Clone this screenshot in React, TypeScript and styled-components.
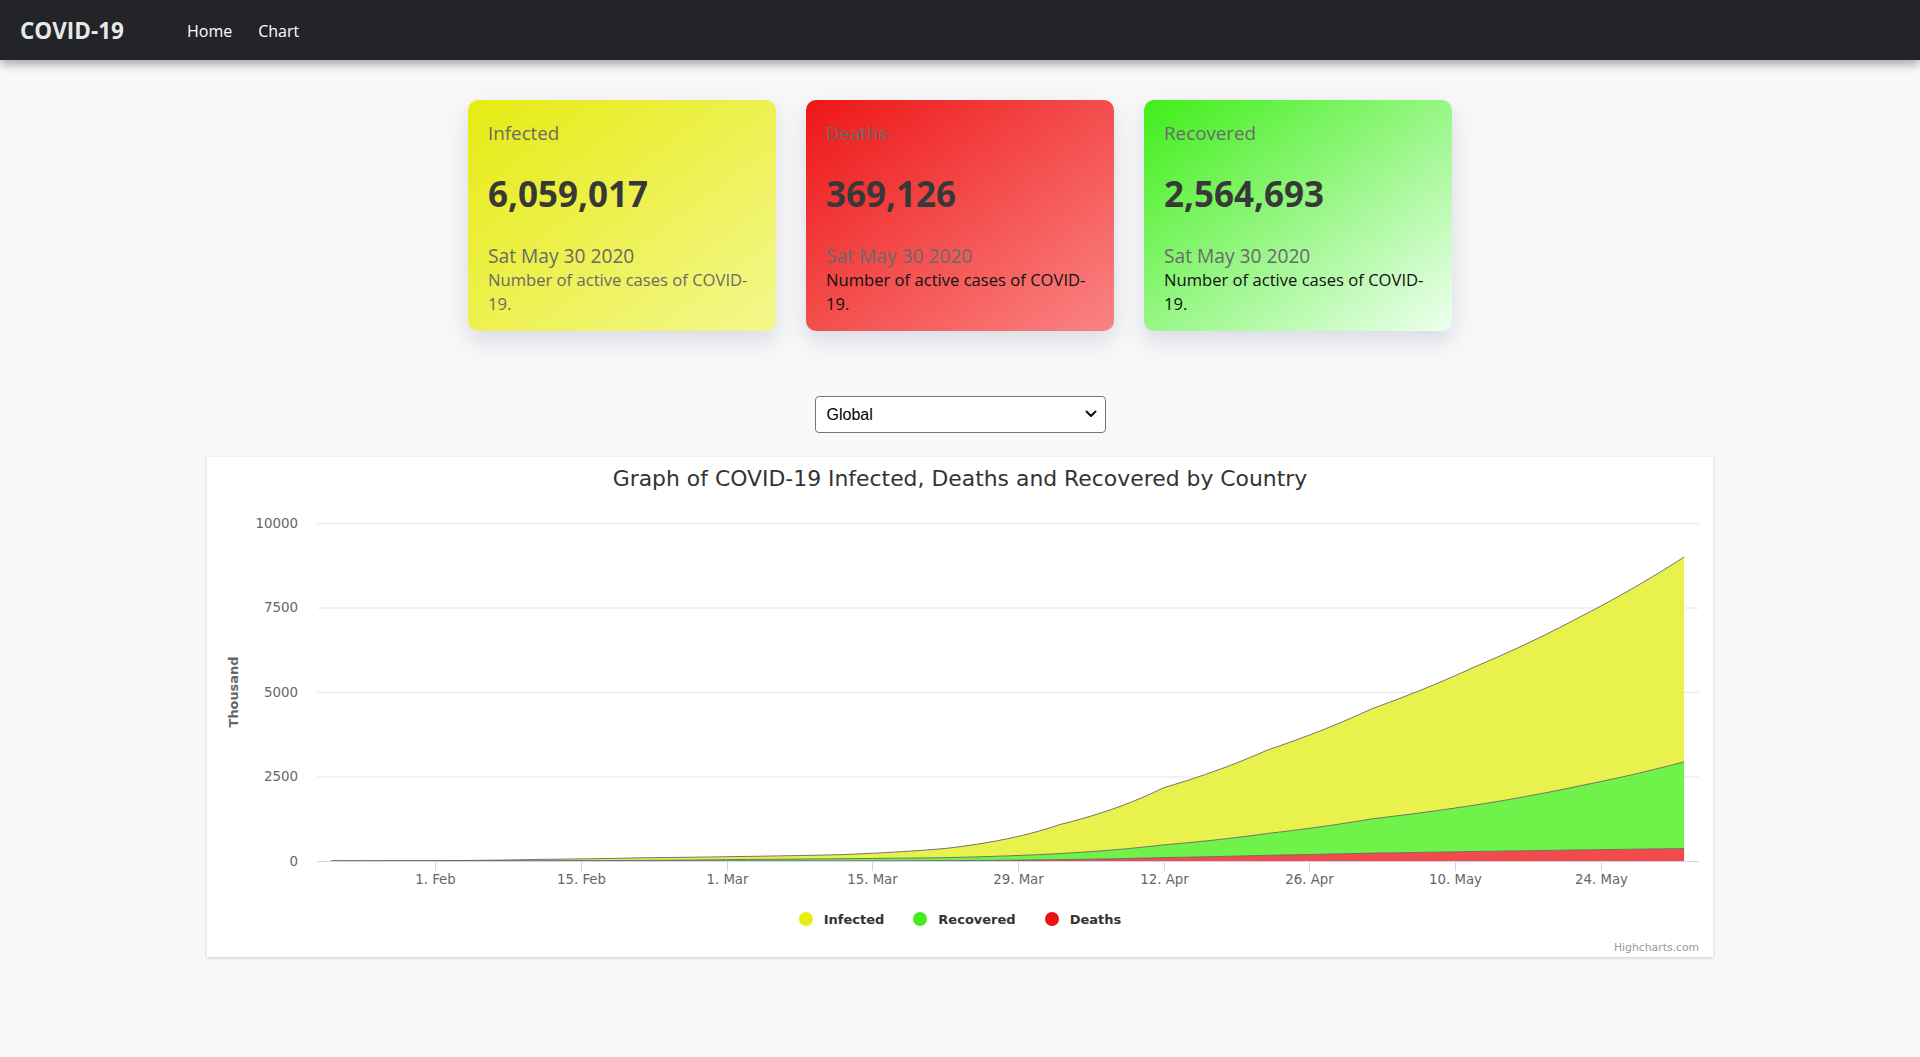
import React from "react";
import styled, { createGlobalStyle } from "styled-components";

const GlobalStyle = createGlobalStyle`
  html, body { margin: 0; padding: 0; }
  body {
    background: #f8f8f8;
    font-family: "Open Sans", "Noto Sans", sans-serif;
  }
`;

const Page = styled.div`
  min-height: 1057px;
  display: flex;
  flex-direction: column;
`;

const NavBar = styled.nav`
  height: 60px;
  background: #222427;
  display: flex;
  align-items: center;
  padding: 0 20px;
  box-shadow: 0 4px 10px rgba(0, 0, 0, 0.35);
  position: relative;
  z-index: 1;
`;

const Brand = styled.span`
  font-size: 22.5px;
  font-weight: 700;
  color: #e8e8e8;
  margin-right: 63px;
  padding-top: 1px;
`;

const NavLinks = styled.div`
  display: flex;
  gap: 26px;
  padding-top: 2px;
`;

const NavLink = styled.a`
  font-size: 16px;
  color: #ffffff;
  text-decoration: none;
`;

const Main = styled.main`
  display: flex;
  flex-direction: column;
  align-items: center;
  padding-top: 40px;
`;

const CardRow = styled.div`
  display: flex;
  gap: 30px;
`;

const StatCard = styled.div<{ $from: string; $to: string }>`
  width: 308px;
  box-sizing: border-box;
  padding: 21px 18px 15px 20px;
  border-radius: 10px;
  background: linear-gradient(to bottom right, ${(p) => p.$from}, ${(p) => p.$to});
  box-shadow: 0 10px 22px rgba(110, 120, 170, 0.22);
  display: flex;
  flex-direction: column;
`;

const CardTitle = styled.div`
  font-size: 18.8px;
  line-height: 24px;
  color: #6a6a6a;
`;

const CardNumber = styled.div`
  font-size: 35px;
  line-height: 44px;
  font-weight: 700;
  color: #383838;
  margin-top: 27px;
`;

const CardDate = styled.div`
  font-size: 19.2px;
  line-height: 24px;
  color: #6a6a6a;
  margin-top: 28px;
`;

const CardText = styled.div<{ $color: string }>`
  font-size: 16.6px;
  line-height: 24px;
  color: ${(p) => p.$color};
`;

const SelectWrap = styled.div`
  position: relative;
  margin-top: 65px;
  width: 291px;
  height: 37px;
`;

const Select = styled.select`
  appearance: none;
  -webkit-appearance: none;
  width: 100%;
  height: 100%;
  box-sizing: border-box;
  border: 1px solid #767676;
  border-radius: 4px;
  background: #ffffff;
  padding: 0 30px 0 11px;
  font-family: "Liberation Sans", Arial, sans-serif;
  font-size: 16px;
  color: #000;
`;

const Chevron = styled.svg`
  position: absolute;
  right: 9px;
  top: 14px;
  pointer-events: none;
`;

const ChartCard = styled.section`
  margin-top: 24px;
  width: 1506px;
  height: 500px;
  background: #ffffff;
  box-shadow: 0 1px 4px rgba(0, 0, 0, 0.16);
  display: flex;
  flex-direction: column;
  font-family: "DejaVu Sans", Verdana, sans-serif;
`;

const ChartTitle = styled.div`
  height: 44px;
  line-height: 44px;
  text-align: center;
  font-size: 21.9px;
  color: #333333;
`;

const Legend = styled.div`
  height: 44px;
  display: flex;
  justify-content: center;
  align-items: center;
  gap: 29px;
`;

const LegendItem = styled.div`
  display: flex;
  align-items: center;
  gap: 11px;
  font-size: 13px;
  font-weight: 700;
  color: #333333;
`;

const LegendDot = styled.span<{ $color: string }>`
  width: 14px;
  height: 14px;
  border-radius: 50%;
  background: ${(p) => p.$color};
`;

const Credits = styled.div`
  height: 14px;
  line-height: 14px;
  text-align: right;
  padding-right: 14px;
  font-size: 10.8px;
  color: #999999;
`;

// ---------- data ----------
const KEY_DAYS = [0, 11, 20, 30, 39, 49, 59, 70, 80, 90, 100, 110, 120, 130];
const CONFIRMED = [0.555, 12, 42.7, 76.2, 86, 119, 272, 857, 1691, 2472, 3257, 4101, 4997, 6059.017];
const RECOVERED = [0.028, 0.28, 4, 18, 42, 64, 87, 178, 376, 646, 1015, 1376, 1897, 2564.693];
const DEATHS = [0.017, 0.26, 1.0, 2.25, 2.94, 4.26, 11.3, 42.1, 102, 170, 233, 283, 328, 369.126];

function interp(vals: number[]): number[] {
  const out: number[] = [];
  for (let d = 0; d <= 130; d++) {
    let i = 0;
    while (i < KEY_DAYS.length - 2 && d > KEY_DAYS[i + 1]) i++;
    const a = KEY_DAYS[i];
    const b = KEY_DAYS[i + 1];
    const t = (d - a) / (b - a);
    out.push(Math.exp(Math.log(vals[i]) * (1 - t) + Math.log(vals[i + 1]) * t));
  }
  return out;
}

const conf = interp(CONFIRMED);
const rec = interp(RECOVERED);
const dea = interp(DEATHS);

const PLOT_L = 110;
const PLOT_R = 1492;
const PLOT_T = 22;
const PLOT_B = 360;
const PX_DAY = 10.407;
const X0 = 124.2;
const YS = (PLOT_B - PLOT_T) / 10000;

const xAt = (d: number) => X0 + d * PX_DAY;
const yAt = (v: number) => PLOT_B - v * YS;

const topD = dea;
const topR = dea.map((v, i) => v + rec[i]);
const topI = topR.map((v, i) => v + conf[i]);
const zero = dea.map(() => 0);

function linePath(top: number[]): string {
  return top.map((v, i) => `${i === 0 ? "M" : "L"}${xAt(i).toFixed(2)},${yAt(v).toFixed(2)}`).join(" ");
}
function areaPath(top: number[], bottom: number[]): string {
  const up = linePath(top);
  const down = bottom
    .map((v, i) => ({ v, i }))
    .reverse()
    .map(({ v, i }) => `L${xAt(i).toFixed(2)},${yAt(v).toFixed(2)}`)
    .join(" ");
  return `${up} ${down} Z`;
}

const Y_TICKS = [0, 2500, 5000, 7500, 10000];
const X_TICKS = ["1. Feb", "15. Feb", "1. Mar", "15. Mar", "29. Mar", "12. Apr", "26. Apr", "10. May", "24. May"];

const SERIES = [
  { name: "Infected", fill: "#e9f14c", dot: "#e6ee12", top: topI, bottom: topR },
  { name: "Recovered", fill: "#6ff34b", dot: "#44ee1a", top: topR, bottom: topD },
  { name: "Deaths", fill: "#f34b4b", dot: "#ee1111", top: topD, bottom: zero },
];

const AreaChart: React.FC = () => (
  <svg width={1506} height={396} viewBox="0 0 1506 396">
    {Y_TICKS.map((v) => (
      <g key={v}>
        {v !== 0 && (
          <line x1={PLOT_L} x2={PLOT_R} y1={yAt(v) + 0.5} y2={yAt(v) + 0.5} stroke="#e6e6e6" strokeWidth={1} />
        )}
        <text x={91} y={yAt(v) + 4.8} textAnchor="end" fontSize={13.4} fill="#666666">
          {v}
        </text>
      </g>
    ))}
    <text
      transform={`translate(31, ${(PLOT_T + PLOT_B) / 2}) rotate(-90)`}
      textAnchor="middle"
      fontSize={12.9}
      fontWeight={700}
      fill="#666666"
    >
      Thousand
    </text>
    {SERIES.slice()
      .reverse()
      .map((s) => (
        <path key={s.name} d={areaPath(s.top, s.bottom)} fill={s.fill} stroke="none" />
      ))}
    {SERIES.slice()
      .reverse()
      .map((s) => (
        <path key={s.name + "l"} d={linePath(s.top)} fill="none" stroke="#666666" strokeWidth={1} strokeOpacity={0.9} />
      ))}
    <line x1={PLOT_L} x2={PLOT_R} y1={PLOT_B + 0.5} y2={PLOT_B + 0.5} stroke="#ccd6eb" strokeWidth={1} />
    {X_TICKS.map((label, i) => {
      const x = Math.round(xAt(10 + i * 14)) + 0.5;
      return (
        <g key={label}>
          <line x1={x} x2={x} y1={PLOT_B} y2={PLOT_B + 10} stroke="#ccd6eb" strokeWidth={1} />
          <text x={x} y={PLOT_B + 23} textAnchor="middle" fontSize={13.3} fill="#666666">
            {label}
          </text>
        </g>
      );
    })}
  </svg>
);

const CARDS = [
  { title: "Infected", value: "6,059,017", from: "#e6eb12", to: "#f4f78e", desc: "#6a6a6a" },
  { title: "Deaths", value: "369,126", from: "#ee1616", to: "#fa8484", desc: "#111111" },
  { title: "Recovered", value: "2,564,693", from: "#3fee18", to: "#eefff0", desc: "#111111" },
];

export default function App() {
  return (
    <Page>
      <GlobalStyle />
      <NavBar>
        <Brand>COVID-19</Brand>
        <NavLinks>
          <NavLink href="#">Home</NavLink>
          <NavLink href="#">Chart</NavLink>
        </NavLinks>
      </NavBar>
      <Main>
        <CardRow>
          {CARDS.map((c) => (
            <StatCard key={c.title} $from={c.from} $to={c.to}>
              <CardTitle>{c.title}</CardTitle>
              <CardNumber>{c.value}</CardNumber>
              <CardDate>Sat May 30 2020</CardDate>
              <CardText $color={c.desc}>Number of active cases of COVID-19.</CardText>
            </StatCard>
          ))}
        </CardRow>
        <SelectWrap>
          <Select defaultValue="Global">
            <option value="Global">Global</option>
          </Select>
          <Chevron width="12" height="8" viewBox="0 0 12 8">
            <path d="M1.5 1.5 L6 6 L10.5 1.5" fill="none" stroke="#111" strokeWidth="2" strokeLinecap="round" strokeLinejoin="round" />
          </Chevron>
        </SelectWrap>
        <ChartCard>
          <ChartTitle>Graph of COVID-19 Infected, Deaths and Recovered by Country</ChartTitle>
          <AreaChart />
          <Legend>
            {SERIES.map((s) => (
              <LegendItem key={s.name}>
                <LegendDot $color={s.dot} />
                {s.name}
              </LegendItem>
            ))}
          </Legend>
          <Credits>Highcharts.com</Credits>
        </ChartCard>
      </Main>
    </Page>
  );
}
